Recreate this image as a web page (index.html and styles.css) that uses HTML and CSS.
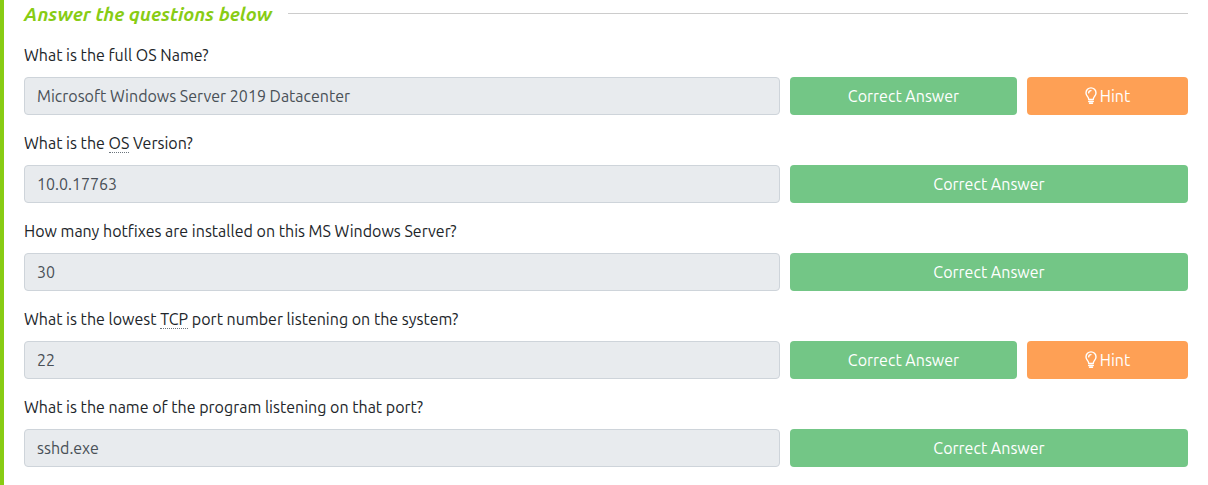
FILE: index.html
```
<!DOCTYPE html>
<html lang="en">
<head>
<meta charset="utf-8">
<meta name="viewport" content="width=device-width, initial-scale=1">
<title>Questions</title>
<link rel="stylesheet" href="styles.css">
</head>
<body>
<svg class="sprite" aria-hidden="true">
  <symbol id="bulb" viewBox="0 0 12 18">
    <path d="M3.7 12.200C3.700 9.700 1 8.800 1 5.900a5 5 0 0 1 10 0c0 2.900-2.700 3.800-2.700 6.300M3.700 12.500h4.600M3.700 14.500h4.600M4.500 16.300h3M3.700 5.900A2.300 2.300 0 0 1 6 3.600"/>
  </symbol>
</svg>
<main class="task">
  <h2 class="heading">Answer the questions below</h2>
  <form class="questions">
    <div class="question">
      <label class="prompt" for="q1">What is the full OS Name?</label>
      <div class="row">
        <input class="answer" id="q1" type="text" value="Microsoft Windows Server 2019 Datacenter" disabled>
        <div class="actions with-hint">
          <button class="btn correct" type="button">Correct Answer</button>
          <button class="btn hint" type="button"><svg class="icon" aria-hidden="true"><use href="#bulb"/></svg>Hint</button>
        </div>
      </div>
    </div>
    <div class="question">
      <label class="prompt" for="q2">What is the <abbr title="Operating System">OS</abbr> Version?</label>
      <div class="row">
        <input class="answer" id="q2" type="text" value="10.0.17763" disabled>
        <div class="actions">
          <button class="btn correct" type="button">Correct Answer</button>
        </div>
      </div>
    </div>
    <div class="question">
      <label class="prompt" for="q3">How many hotfixes are installed on this MS Windows Server?</label>
      <div class="row">
        <input class="answer" id="q3" type="text" value="30" disabled>
        <div class="actions">
          <button class="btn correct" type="button">Correct Answer</button>
        </div>
      </div>
    </div>
    <div class="question">
      <label class="prompt" for="q4">What is the lowest <abbr title="Transmission Control Protocol">TCP</abbr> port number listening on the system?</label>
      <div class="row">
        <input class="answer" id="q4" type="text" value="22" disabled>
        <div class="actions with-hint">
          <button class="btn correct" type="button">Correct Answer</button>
          <button class="btn hint" type="button"><svg class="icon" aria-hidden="true"><use href="#bulb"/></svg>Hint</button>
        </div>
      </div>
    </div>
    <div class="question">
      <label class="prompt" for="q5">What is the name of the program listening on that port?</label>
      <div class="row">
        <input class="answer" id="q5" type="text" value="sshd.exe" disabled>
        <div class="actions">
          <button class="btn correct" type="button">Correct Answer</button>
        </div>
      </div>
    </div>
  </form>
</main>
</body>
</html>
```
FILE: styles.css
```
* {
  box-sizing: border-box;
}

body {
  margin: 0;
  background: #fff;
  color: #212529;
  font: 16px/24px Ubuntu, "Noto Sans", sans-serif;
}

.sprite {
  display: none;
}

.task {
  min-height: 100vh;
  padding: 2px 20px 18px;
  border-left: 4px solid #88cc14;
}

.heading {
  display: flex;
  align-items: center;
  gap: 16px;
  margin: 0 0 17px;
  color: #88cc14;
  font-size: 19px;
  font-style: italic;
  font-weight: 700;
  line-height: 24px;
}

.heading::after {
  content: "";
  flex: 1;
  height: 2px;
  border-top: 1px solid #ccc;
}

.questions {
  display: grid;
  gap: 16px;
}

.question {
  display: grid;
  gap: 10px;
}

abbr {
  text-decoration: none;
  border-bottom: 1px dotted #6c757d;
}

.row {
  display: grid;
  grid-template-columns: 756fr 398fr;
  gap: 10px;
}

.actions {
  display: grid;
  gap: 10px;
}

.with-hint {
  grid-template-columns: 227fr 161fr;
}

.answer {
  width: 100%;
  min-width: 0;
  height: 38px;
  padding: 6px 12px;
  border: 1px solid #ced4da;
  border-radius: 4px;
  background: #e8ebee;
  color: #495057;
  font: inherit;
}

.btn {
  display: flex;
  align-items: center;
  justify-content: center;
  gap: 3px;
  height: 38px;
  padding: 0 12px;
  border: 0;
  border-radius: 4px;
  color: #fff;
  font: inherit;
}

.correct {
  background: #73c686;
}

.hint {
  background: #fea055;
}

.icon {
  width: 12px;
  height: 18px;
  fill: none;
  stroke: currentColor;
  stroke-width: 1.4;
  stroke-linecap: round;
}
```
